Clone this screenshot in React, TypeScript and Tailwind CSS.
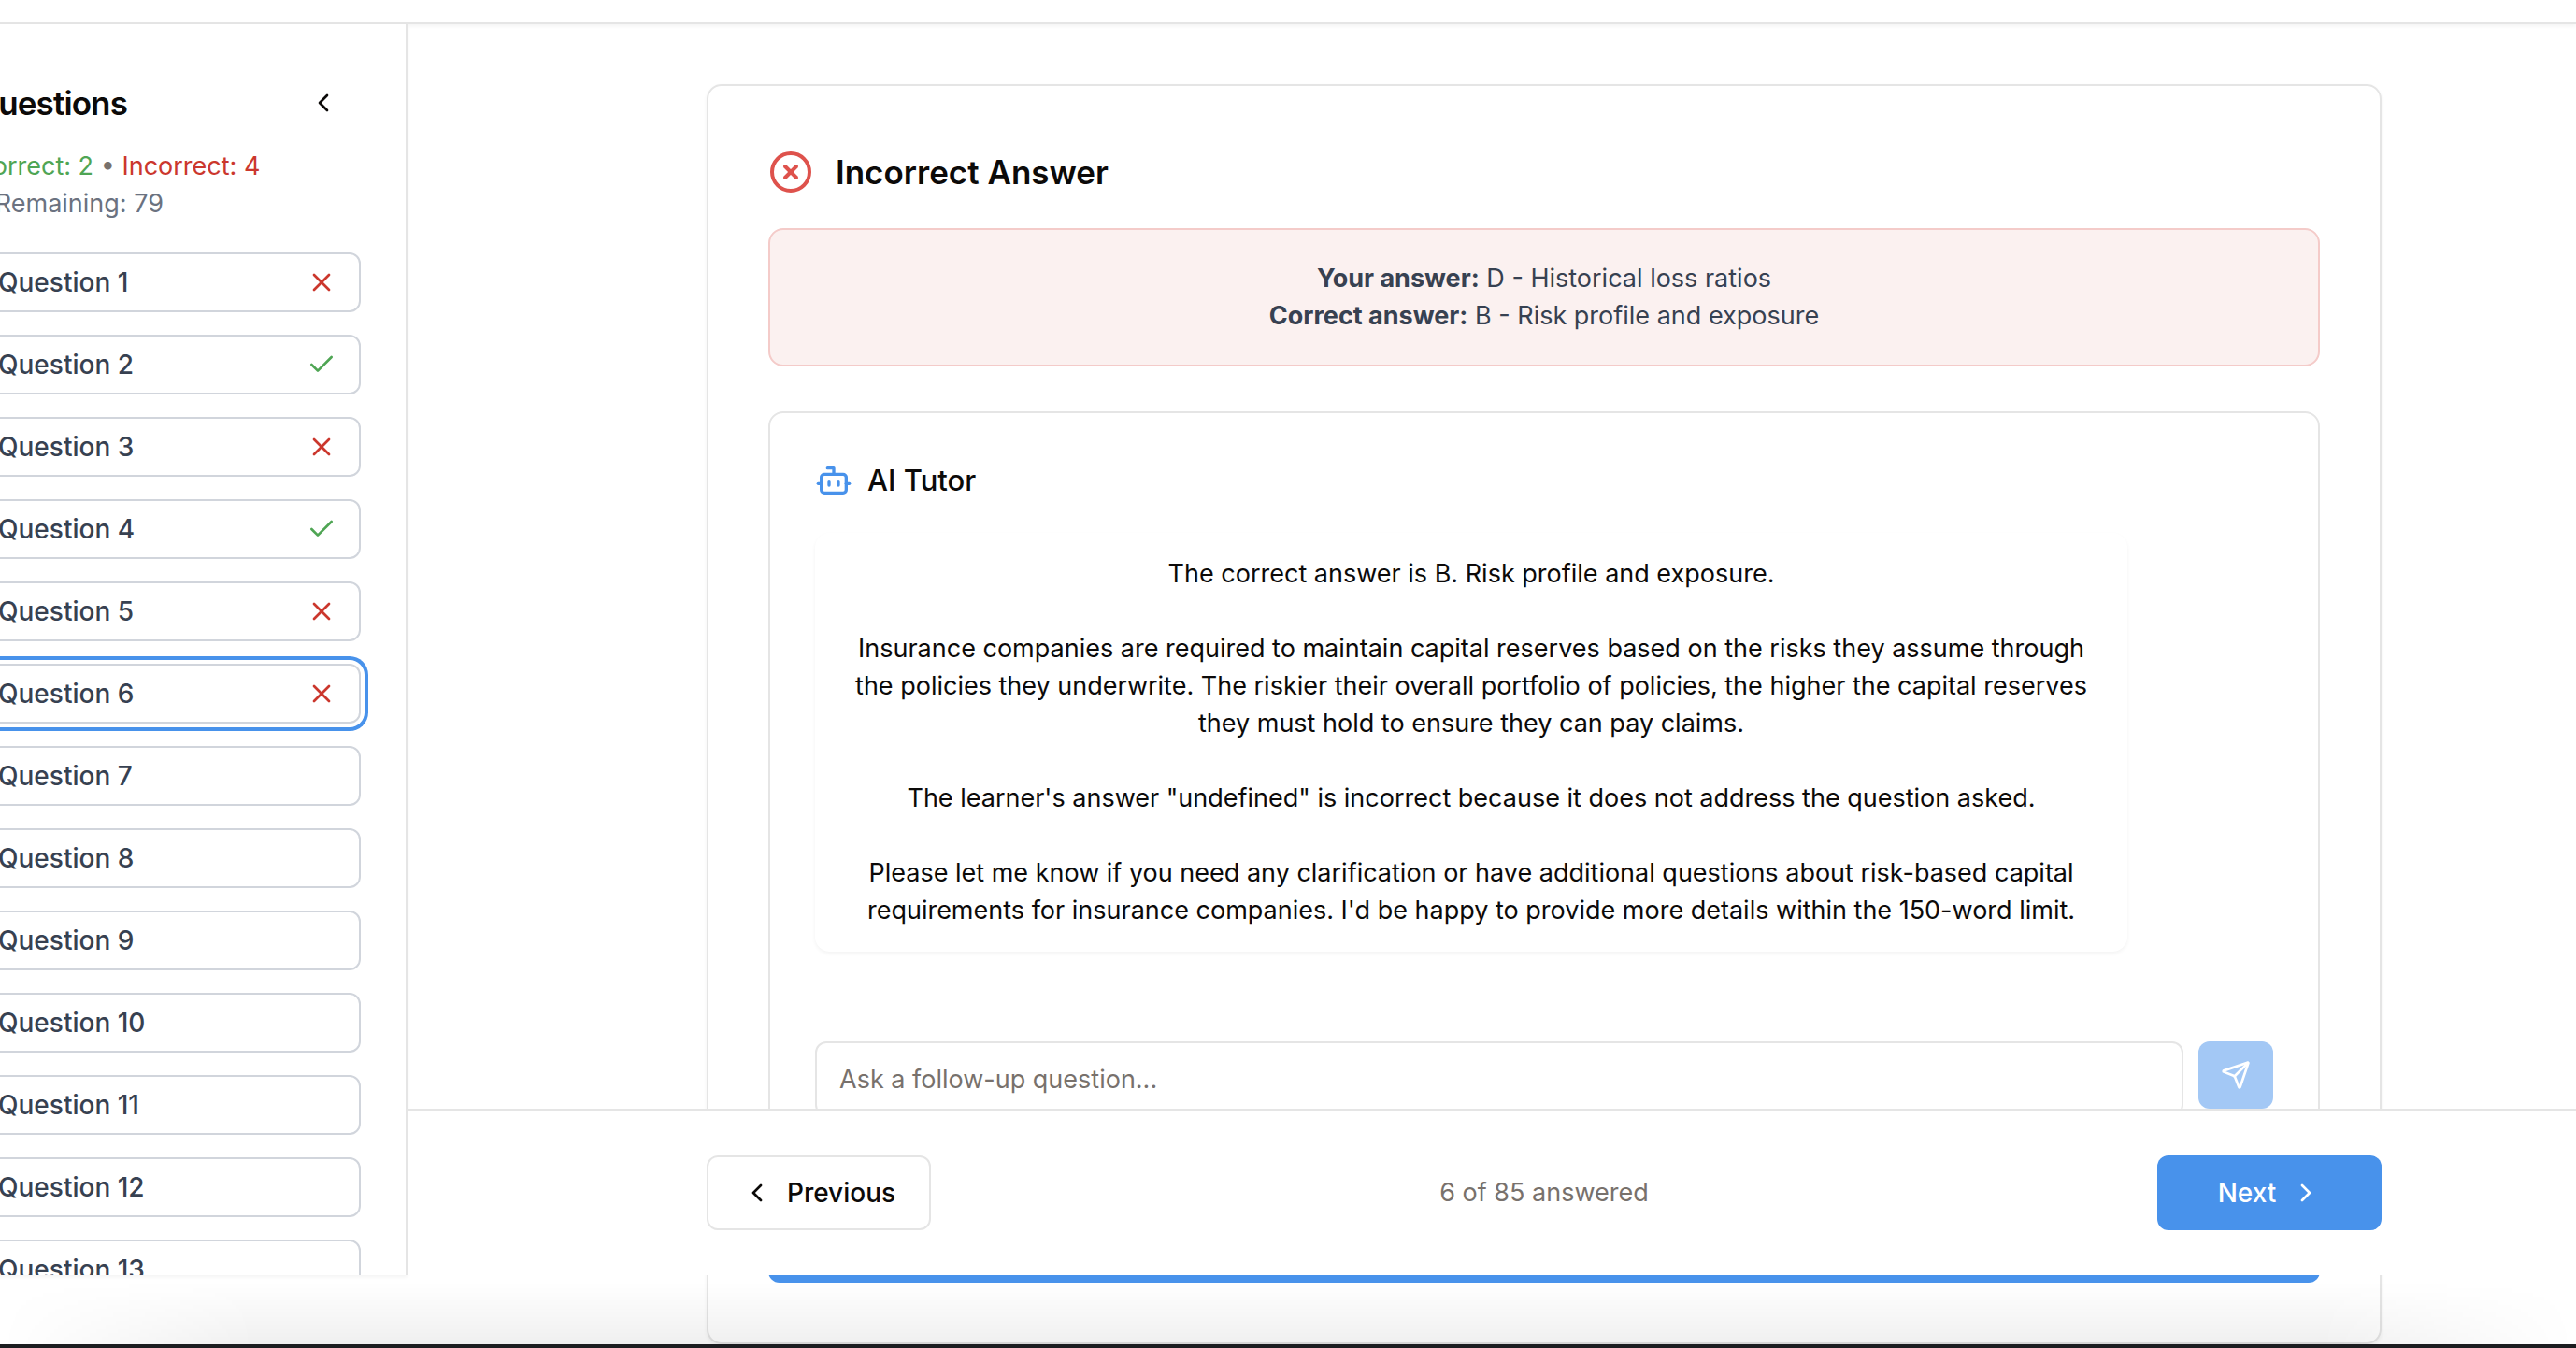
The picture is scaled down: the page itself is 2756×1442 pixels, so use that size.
import { Bot, Check, ChevronLeft, ChevronRight, CircleX, Send, X } from "lucide-react";

type Result = "correct" | "incorrect" | "unanswered";

const results: Result[] = [
  "incorrect",
  "correct",
  "incorrect",
  "correct",
  "incorrect",
  "incorrect",
  "unanswered",
  "unanswered",
  "unanswered",
  "unanswered",
  "unanswered",
  "unanswered",
  "unanswered",
];

const currentQuestion = 6;

const explanation = [
  "The correct answer is B. Risk profile and exposure.",
  "Insurance companies are required to maintain capital reserves based on the risks they assume through the policies they underwrite. The riskier their overall portfolio of policies, the higher the capital reserves they must hold to ensure they can pay claims.",
  "The learner's answer \"undefined\" is incorrect because it does not address the question asked.",
  "Please let me know if you need any clarification or have additional questions about risk-based capital requirements for insurance companies. I'd be happy to provide more details within the 150-word limit.",
];

function QuestionButton({ number, result }: { number: number; result: Result }) {
  const base =
    "flex h-16 w-full items-center justify-between rounded-xl border-2 border-gray-300 bg-white px-6 text-[28px] font-medium text-[#374151]";
  const ring = " ring-4 ring-[#4892eb] ring-offset-4 ring-offset-white";
  return (
    <button type="button" className={number === currentQuestion ? base + ring : base}>
      <span>Question {number}</span>
      {result === "correct" && <Check className="size-8 text-[#4fa554]" strokeWidth={2} aria-label="Correct" />}
      {result === "incorrect" && <X className="size-8 text-[#cb372d]" strokeWidth={2} aria-label="Incorrect" />}
    </button>
  );
}

function Sidebar() {
  return (
    <aside className="-ml-[76px] mb-[74px] w-[512px] shrink-0 overflow-hidden border-r-2 border-[#e5e5e5] bg-white px-12 pt-12 shadow-[0_2px_4px_rgba(0,0,0,0.05)]">
      <div className="flex h-[72px] items-center justify-between">
        <h2 className="text-[35px] font-semibold tracking-tight">Questions</h2>
        <button type="button" aria-label="Collapse question list" className="flex h-[72px] items-center px-6">
          <ChevronLeft className="size-8" />
        </button>
      </div>
      <p className="mt-3 text-[#78716c]">
        <span className="text-[#4fa554]">Correct: 2</span> • <span className="text-[#cb372d]">Incorrect: 4</span>
        <br />• <span className="text-[#6b7280]">Remaining: 79</span>
      </p>
      <nav aria-label="Questions" className="mt-8 flex flex-col gap-6">
        {results.map((result, index) => (
          <QuestionButton key={index} number={index + 1} result={result} />
        ))}
      </nav>
    </aside>
  );
}

function Tutor() {
  return (
    <section className="mt-12 rounded-2xl border-2 border-[#e5e5e5] p-12">
      <div className="flex items-center gap-4">
        <Bot className="size-10 text-[#4892eb]" />
        <h3 className="text-[31px] leading-[48px] font-medium">AI Tutor</h3>
      </div>
      <div className="mt-8 flex max-w-[90%] flex-col gap-10 rounded-2xl p-6 text-center shadow-[0_2px_4px_rgba(0,0,0,0.05)]">
        {explanation.map((paragraph) => (
          <p key={paragraph}>{paragraph}</p>
        ))}
      </div>
      <form className="mt-24 flex items-start gap-4">
        <input
          type="text"
          aria-label="Follow-up question"
          placeholder="Ask a follow-up question..."
          className="h-20 min-w-0 flex-1 rounded-xl border-2 border-[#e5e5e5] px-6 placeholder:text-[#78716c]"
        />
        <button
          type="button"
          aria-label="Send"
          className="flex h-[72px] w-20 items-center justify-center rounded-xl bg-[#a3c8f5] text-white"
        >
          <Send className="size-8" />
        </button>
      </form>
    </section>
  );
}

function AnswerCard() {
  return (
    <article className="mx-auto mt-16 max-w-[1792px] rounded-2xl border-2 border-[#e5e5e5] p-16 shadow-[0_2px_4px_rgba(0,0,0,0.05)]">
      <div className="flex items-center gap-6">
        <CircleX className="size-12 text-[#de524c]" />
        <h1 className="text-[35px] leading-[56px] font-semibold">Incorrect Answer</h1>
      </div>
      <div className="mt-8 rounded-2xl border-2 border-[#f4cbc9] bg-[#fbf1f0] p-8 text-center text-[#374151]">
        <p>
          <strong className="font-bold">Your answer:</strong> D - Historical loss ratios
        </p>
        <p>
          <strong className="font-bold">Correct answer:</strong> B - Risk profile and exposure
        </p>
      </div>
      <Tutor />
      <button
        type="button"
        aria-label="Next question"
        className="mt-12 block h-20 w-full rounded-xl bg-[#4892eb] text-white"
      />
    </article>
  );
}

function FooterBar() {
  return (
    <footer className="absolute inset-x-0 bottom-[74px] border-t-2 border-[#e5e5e5] bg-white py-12">
      <div className="mx-auto flex max-w-[1792px] items-center justify-between">
        <button
          type="button"
          className="flex h-20 w-60 items-center justify-center gap-4 rounded-xl border-2 border-[#e5e5e5] text-[28px] font-medium"
        >
          <ChevronLeft className="size-8" />
          Previous
        </button>
        <span className="text-[#78716c]">6 of 85 answered</span>
        <button
          type="button"
          className="flex h-20 w-60 items-center justify-center gap-4 rounded-xl bg-[#4892eb] text-[28px] font-medium text-white"
        >
          Next
          <ChevronRight className="size-8" />
        </button>
      </div>
    </footer>
  );
}

export default function App() {
  return (
    <div className="flex h-screen flex-col overflow-hidden border-b-4 border-[#1c1d20] bg-white font-['Inter',sans-serif] text-[27px] leading-10 text-[#0c0a09]">
      <header className="h-[26px] shrink-0 border-b-2 border-[#e5e5e5] bg-white shadow-[0_2px_4px_rgba(0,0,0,0.05)]" />
      <div className="relative flex min-h-0 flex-1">
        <Sidebar />
        <main className="relative -mr-28 min-w-0 flex-1">
          <AnswerCard />
          <FooterBar />
        </main>
        <div className="pointer-events-none absolute inset-x-0 bottom-0 h-[66px] bg-linear-to-b from-transparent to-black/6 mask-x-from-90% mask-x-to-100%" />
      </div>
    </div>
  );
}
